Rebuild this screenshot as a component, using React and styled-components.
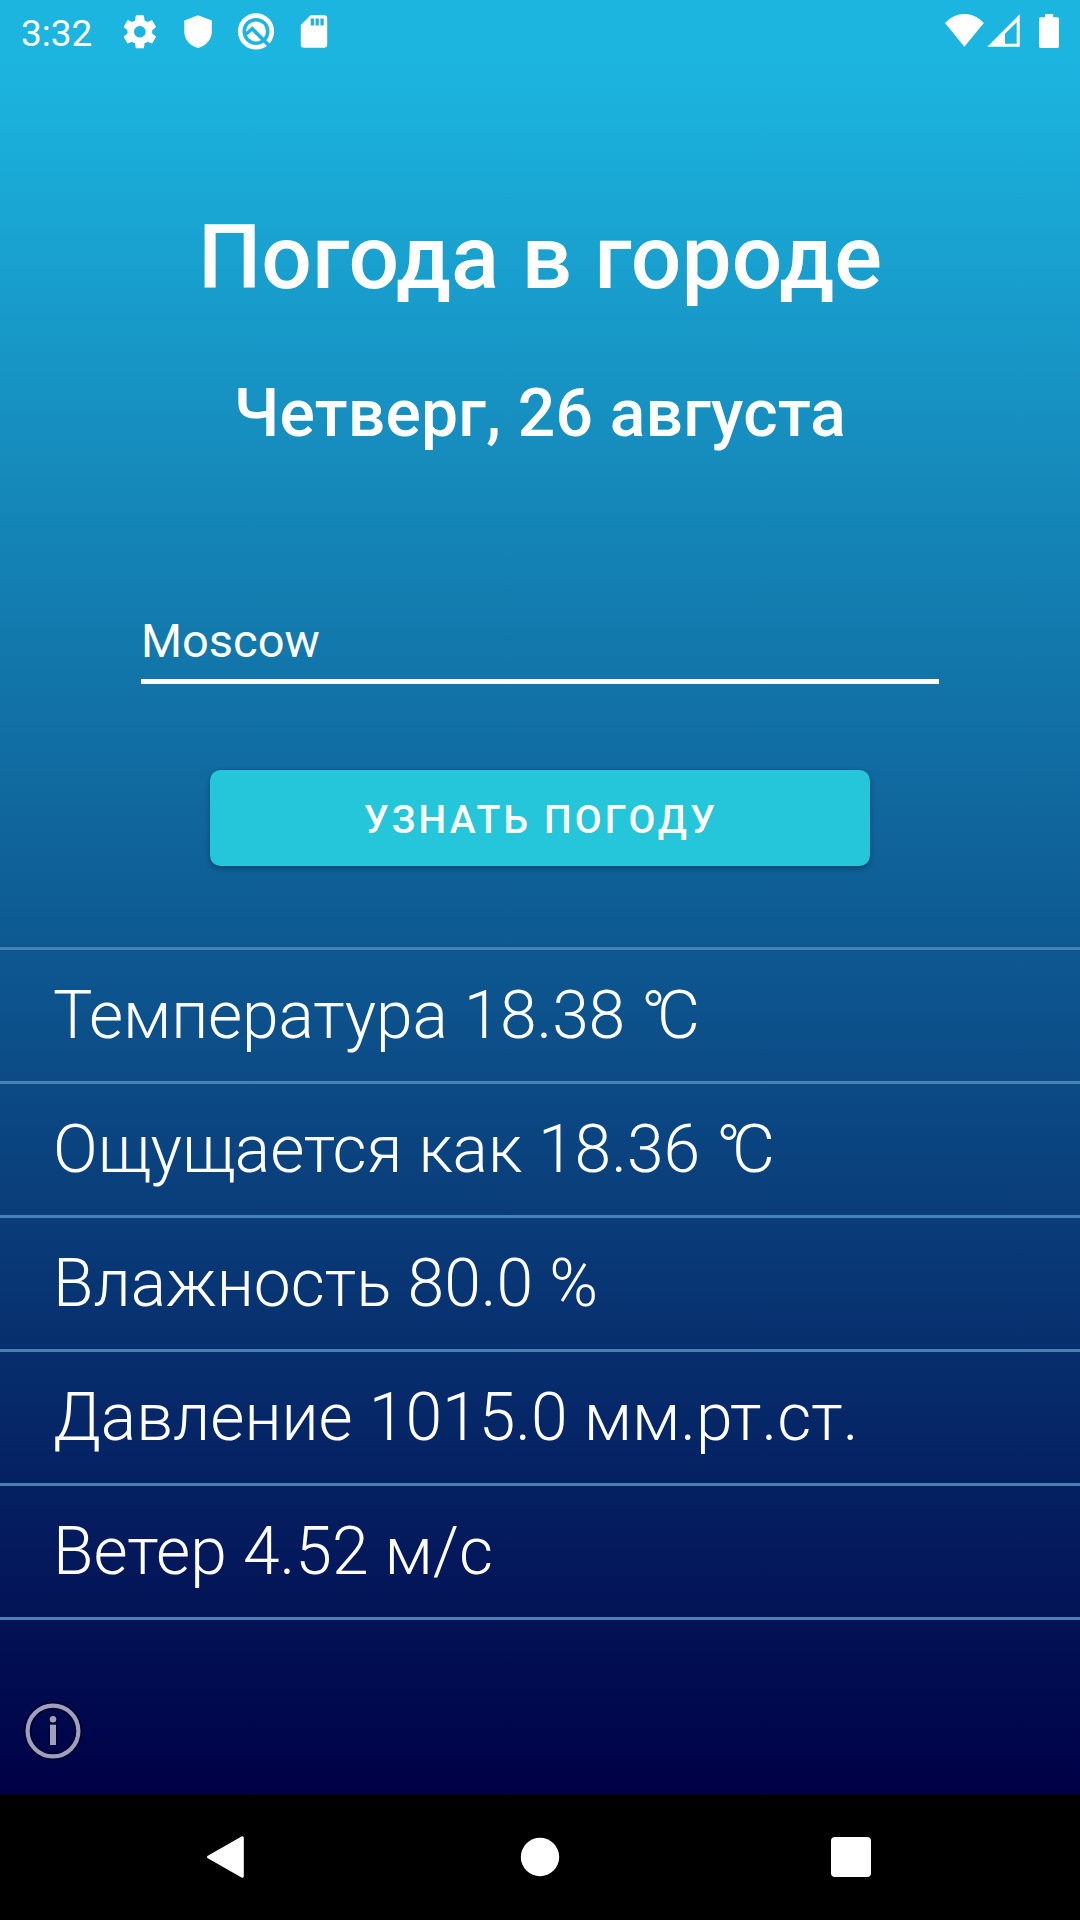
import React from "react";
import styled, { createGlobalStyle } from "styled-components";

const GlobalStyle = createGlobalStyle`
  *, *::before, *::after { box-sizing: border-box; }
  body { margin: 0; background: #000; }
`;

const Screen = styled.div`
  width: 1080px;
  height: 1920px;
  display: flex;
  flex-direction: column;
  color: #fff;
  font-family: Roboto, "Noto Sans", sans-serif;
  overflow: hidden;
`;

const StatusBar = styled.header`
  flex: none;
  height: 63px;
  display: flex;
  align-items: flex-start;
  padding: 12px 20px 0 21px;
  background: #1cb5e0;
`;

const Clock = styled.time`
  width: 99px;
  font-size: 37px;
  line-height: 43px;
`;

const StatusIcons = styled.div`
  display: flex;
  gap: ${(p) => p.$gap}px;
  margin-left: ${(p) => (p.$end ? "auto" : "0")};
`;

const SignalGroup = styled.div`
  display: flex;
  gap: 3px;
`;

const Glyph = styled.svg`
  display: block;
  flex: none;
  width: ${(p) => p.$w}px;
  height: ${(p) => p.$h}px;
  fill: #fff;
`;

const Content = styled.main`
  flex: 1;
  min-height: 0;
  display: flex;
  flex-direction: column;
  background: linear-gradient(180deg, #1cb5e0, #000046);
`;

const Title = styled.h1`
  margin: 143px 0 0;
  text-align: center;
  font-size: 89.25px;
  line-height: 104px;
  font-weight: 500;
`;

const DateLine = styled.h2`
  margin: 65px 0 0;
  text-align: center;
  font-size: 66px;
  line-height: 78px;
  font-weight: 500;
  letter-spacing: 0.2px;
`;

const CityInput = styled.input`
  width: 798px;
  height: 72px;
  margin: 159px 0 0 141px;
  padding: 0 0 11px;
  border: 0;
  border-bottom: 5px solid #fff;
  border-radius: 0;
  outline: 0;
  background: transparent;
  color: #fff;
  font: 400 47px/56px Roboto, "Noto Sans", sans-serif;
`;

const SubmitButton = styled.button`
  width: 660px;
  height: 96px;
  margin: 86px 0 0 210px;
  padding: 3px 0 0 2px;
  border: 0;
  border-radius: 10.5px;
  background: #26c6da;
  color: #fff;
  box-shadow: 0 3px 6px rgba(0, 0, 0, 0.24), 0 0 3px rgba(0, 0, 0, 0.12);
  font: 500 39px/46px Roboto, "Noto Sans", sans-serif;
  letter-spacing: 3.15px;
`;

const Readings = styled.ul`
  margin: 81px 0 0;
  padding: 0;
  list-style: none;
  border-top: 3px solid #4682b4;
`;

const Reading = styled.li`
  height: 134px;
  padding-left: 53px;
  border-bottom: 3px solid #4682b4;
  font-size: 66px;
  line-height: 131px;
  font-weight: 300;
  letter-spacing: ${(p) => p.$tracking || 0}px;
  white-space: pre;
`;

const Degree = styled.span`
  letter-spacing: -9px;
`;

const InfoButton = styled.button`
  width: 64px;
  height: 64px;
  margin: 79px 0 0 21px;
  padding: 0;
  border: 0;
  background: transparent;
`;

const NavBar = styled.nav`
  flex: none;
  height: 126px;
  display: grid;
  grid-template-columns: 315px 311px 50px;
  align-items: center;
  padding-left: 200px;
  background: #000;
`;

const readings = [
  { text: "Температура 18.38", celsius: true, tracking: -0.16 },
  { text: "Ощущается как 18.36", celsius: true, tracking: -0.06 },
  { text: "Влажность 80.0 %" },
  { text: "Давление 1015.0 мм.рт.ст." },
  { text: "Ветер 4.52 м/с" },
];

const GearIcon = () => (
  <Glyph $w={40} $h={40} viewBox="0 0 24.2 24.2">
    <path d="M19.43 12.98c.04-.32.07-.64.07-.98s-.03-.66-.07-.98l2.11-1.65c.19-.15.24-.42.12-.64l-2-3.46c-.12-.22-.39-.3-.61-.22l-2.49 1c-.52-.4-1.08-.73-1.69-.98l-.38-2.65C14.46 2.18 14.25 2 14 2h-4c-.25 0-.46.18-.49.42l-.38 2.65c-.61.25-1.17.59-1.69.98l-2.49-1c-.23-.09-.49 0-.61.22l-2 3.46c-.13.22-.07.49.12.64l2.11 1.65c-.04.32-.07.65-.07.98s.03.66.07.98l-2.11 1.65c-.19.15-.24.42-.12.64l2 3.46c.12.22.39.3.61.22l2.49-1c.52.4 1.08.73 1.69.98l.38 2.65c.03.24.24.42.49.42h4c.25 0 .46-.18.49-.42l.38-2.65c.61-.25 1.17-.59 1.69-.98l2.49 1c.23.09.49 0 .61-.22l2-3.46c.12-.22.07-.49-.12-.64l-2.11-1.65zM12 15.5c-1.93 0-3.5-1.57-3.5-3.5s1.57-3.5 3.5-3.5 3.5 1.57 3.5 3.5-1.57 3.5-3.5 3.5z" />
  </Glyph>
);

const ShieldIcon = () => (
  <Glyph $w={40} $h={40} viewBox="0 0 40 40">
    <path d="M20 3.3L33.8 8.5V19.5C33.8 27.5 28 34 20 36C12 34 6.3 27.5 6.3 19.5V8.5Z" />
  </Glyph>
);

const CompassIcon = () => (
  <Glyph $w={40} $h={40} viewBox="0 0 40 40">
    <circle cx="20" cy="19.4" r="15.8" fill="none" stroke="#fff" strokeWidth="4.6" />
    <circle cx="20" cy="19.4" r="10" />
    <path d="M9.5 22.5L16.2 16.7L33.5 34" fill="none" stroke="#1cb5e0" strokeWidth="3.6" />
  </Glyph>
);

const CardIcon = () => (
  <Glyph $w={40} $h={40} viewBox="0 0 40 40">
    <path
      fillRule="evenodd"
      d="M16.6 3.3H30a3.2 3.2 0 0 1 3.2 3.2V32.6a3.2 3.2 0 0 1-3.2 3.2H10a3.2 3.2 0 0 1-3.2-3.2V13ZM16.7 6.5V13.4H20V6.5ZM21.5 6.5V13.4H24.8V6.5ZM26.4 6.5V13.4H29.7V6.5Z"
    />
  </Glyph>
);

const WifiIcon = () => (
  <Glyph $w={40} $h={36} viewBox="0 0 40 36">
    <path d="M20.4 34.7L1 11C7 5 13 2 20.4 2S34 5 39.8 11Z" />
  </Glyph>
);

const SignalIcon = () => (
  <Glyph $w={33} $h={36} viewBox="0 0 33 36">
    <path fillRule="evenodd" d="M32.7 2.3V34.8H0.3ZM29.7 10.2L18 21.8V31.7H29.7Z" />
  </Glyph>
);

const BatteryIcon = () => (
  <Glyph $w={21} $h={36} viewBox="0 0 21 36">
    <path d="M6.1 2H14.2V5.3H18.6A1.5 1.5 0 0 1 20 6.8V34.4A1.5 1.5 0 0 1 18.5 36H1.6A1.5 1.5 0 0 1 0.1 34.4V6.8A1.5 1.5 0 0 1 1.6 5.3H6.1Z" />
  </Glyph>
);

const InfoIcon = () => (
  <Glyph $w={64} $h={64} viewBox="0 0 64 64">
    <g fill="none" stroke="#00001c" strokeOpacity="0.6">
      <circle cx="32" cy="32" r="25.4" strokeWidth="8" />
      <path d="M32 24.5V47" strokeWidth="9" />
      <circle cx="32" cy="20.2" r="3.6" strokeWidth="3" />
    </g>
    <circle cx="32" cy="32" r="25.4" fill="none" stroke="#9f9fbe" strokeWidth="4.2" />
    <circle cx="32" cy="20.2" r="3.3" fill="#9f9fbe" />
    <path d="M29 25.7H35V46H29Z" fill="#9f9fbe" />
  </Glyph>
);

const BackIcon = () => (
  <Glyph $w={50} $h={50} viewBox="0 0 50 50">
    <path
      d="M8.5 25L42.3 5.8V44.2Z"
      stroke="#fff"
      strokeWidth="3"
      strokeLinejoin="round"
    />
  </Glyph>
);

const HomeIcon = () => (
  <Glyph $w={50} $h={50} viewBox="0 0 50 50">
    <circle cx="25" cy="25" r="19.2" />
  </Glyph>
);

const RecentsIcon = () => (
  <Glyph $w={50} $h={50} viewBox="0 0 50 50">
    <rect x="5" y="5" width="40" height="40" rx="4" />
  </Glyph>
);

export default function App() {
  return (
    <>
      <GlobalStyle />
      <Screen>
        <StatusBar>
          <Clock>3:32</Clock>
          <StatusIcons $gap={18}>
            <GearIcon />
            <ShieldIcon />
            <CompassIcon />
            <CardIcon />
          </StatusIcons>
          <StatusIcons $gap={19} $end>
            <SignalGroup>
              <WifiIcon />
              <SignalIcon />
            </SignalGroup>
            <BatteryIcon />
          </StatusIcons>
        </StatusBar>
        <Content>
          <Title>Погода в городе</Title>
          <DateLine>Четверг, 26 августа</DateLine>
          <CityInput defaultValue="Moscow" spellCheck={false} />
          <SubmitButton>УЗНАТЬ ПОГОДУ</SubmitButton>
          <Readings>
            {readings.map(({ text, celsius, tracking }) => (
              <Reading key={text} $tracking={tracking}>
                {text}
                {celsius && (
                  <>
                    {" "}
                    <Degree>°</Degree>C
                  </>
                )}
              </Reading>
            ))}
          </Readings>
          <InfoButton>
            <InfoIcon />
          </InfoButton>
        </Content>
        <NavBar>
          <BackIcon />
          <HomeIcon />
          <RecentsIcon />
        </NavBar>
      </Screen>
    </>
  );
}
